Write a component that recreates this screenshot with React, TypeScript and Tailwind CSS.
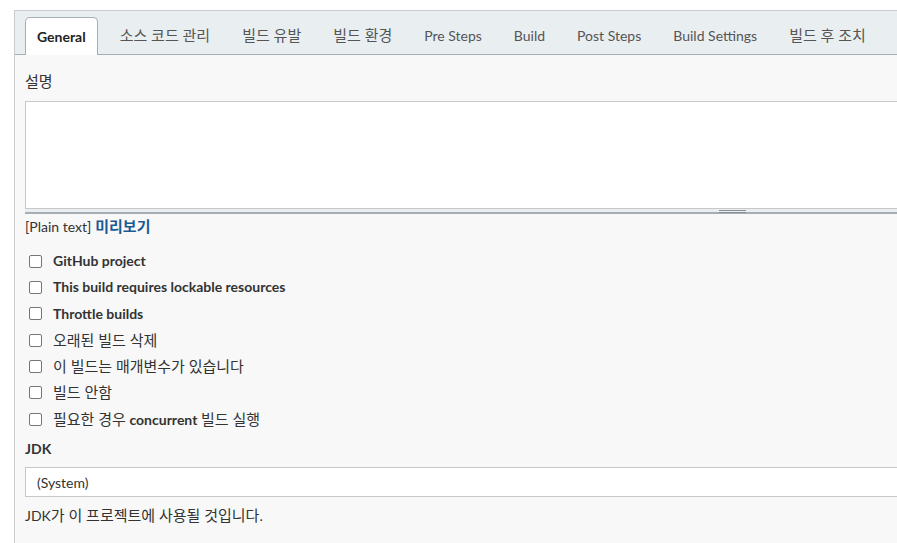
import React from "react";

const tabs = [
    "General",
    "소스 코드 관리",
    "빌드 유발",
    "빌드 환경",
    "Pre Steps",
    "Build",
    "Post Steps",
    "Build Settings",
    "빌드 후 조치",
];

const options = [
    { label: "GitHub project", bold: true },
    { label: "This build requires lockable resources", bold: true },
    { label: "Throttle builds", bold: true },
    { label: "오래된 빌드 삭제" },
    { label: "이 빌드는 매개변수가 있습니다" },
    { label: "빌드 안함" },
    { label: "필요한 경우 concurrent 빌드 실행", concurrent: true },
];

const font = { fontFamily: 'Lato, "Noto Sans CJK KR", sans-serif' };

// Hangul runs get a slightly larger size to match the wider Korean face
const Txt = ({ children }: { children: string }) => {
    const parts = children.split(/([\uac00-\ud7a3][\uac00-\ud7a3 ]*[\uac00-\ud7a3]|[\uac00-\ud7a3])/);
    return (
        <>
            {parts.map((p, i) =>
                /[\uac00-\ud7a3]/.test(p) ? (
                    <span key={i} className="text-[15px]">{p}</span>
                ) : (
                    <React.Fragment key={i}>{p}</React.Fragment>
                )
            )}
        </>
    );
};

export default function App() {
    return (
        <div className="w-[897px] h-[543px] overflow-hidden bg-white pt-[10px] pl-[14px] text-[#333]" style={font}>
            <div className="h-full border-l border-t border-[#c8ccd0] bg-[#f8f8f8]">

                {/* Tabs */}
                <div className="flex h-[44px] items-end gap-[8px] border-b border-[#a5adb5] bg-[#e9eef1] pl-[10px]">
                    {tabs.map((t, i) => (
                        <div
                            key={t}
                            className={
                                i === 0
                                    ? "relative -mb-px mr-[2px] flex h-[38px] items-center rounded-t-[5px] border border-b-0 border-[#a5adb5] bg-white px-[11px] text-[14px] font-bold text-[#222]"
                                    : "flex h-[37px] items-center px-[12px] text-[14px] text-[#555] whitespace-nowrap"
                            }
                        >
                            <Txt>{t}</Txt>
                        </div>
                    ))}
                </div>

                <div className="pl-[10px]">
                    {/* Description */}
                    <div className="pt-[16px] text-[14px] leading-[20px] text-[#333]"><Txt>설명</Txt></div>
                    <div className="mt-[9px] h-[108px] border border-r-0 border-[#c8c8c8] bg-white" />
                    <div className="relative h-[5px] border-b-2 border-[#a8adb2] bg-[#e9eef1]">
                        <div className="absolute left-[694px] top-[1px] h-[1px] w-[27px] bg-[#8a9096]" />
                        <div className="absolute left-[694px] top-[3px] h-[1px] w-[27px] bg-[#8a9096]" />
                    </div>
                    <div className="mt-[2px] flex h-[20px] items-baseline gap-[4px] leading-[20px]">
                        <span className="text-[14px] text-[#333]">[Plain text]</span>
                        <span className="text-[15px] font-bold text-[#1c5a94]">미리보기</span>
                    </div>

                    {/* Options */}
                    <div className="mt-[12px] flex flex-col">
                        {options.map((o) => (
                            <label key={o.label} className="flex h-[26.33px] items-center text-[14px] leading-[20px]">
                                <span className="ml-[4px] mr-[11px] h-[13px] w-[13px] shrink-0 rounded-[2px] border border-[#767676] bg-white" />
                                <span className={o.bold ? "font-bold text-[#333]" : "text-[#333]"}>
                                    {o.concurrent ? (
                                        <>
                                            <Txt>필요한 경우 </Txt>
                                            <span className="font-bold">concurrent</span>
                                            <Txt> 빌드 실행</Txt>
                                        </>
                                    ) : (
                                        <Txt>{o.label}</Txt>
                                    )}
                                </span>
                            </label>
                        ))}
                    </div>

                    {/* JDK */}
                    <div className="mt-[7px] text-[14px] font-bold leading-[20px]">JDK</div>
                    <div className="mt-[8px] flex h-[30px] items-center border border-r-0 border-[#c8c8c8] bg-white pl-[11px] text-[14px] text-[#333]">
                        (System)
                    </div>
                    <div className="mt-[8px] h-[20px] text-[14px] leading-[20px] text-[#333]">
                        <Txt>JDK가 이 프로젝트에 사용될 것입니다.</Txt>
                    </div>
                </div>
            </div>
        </div>
    );
}
